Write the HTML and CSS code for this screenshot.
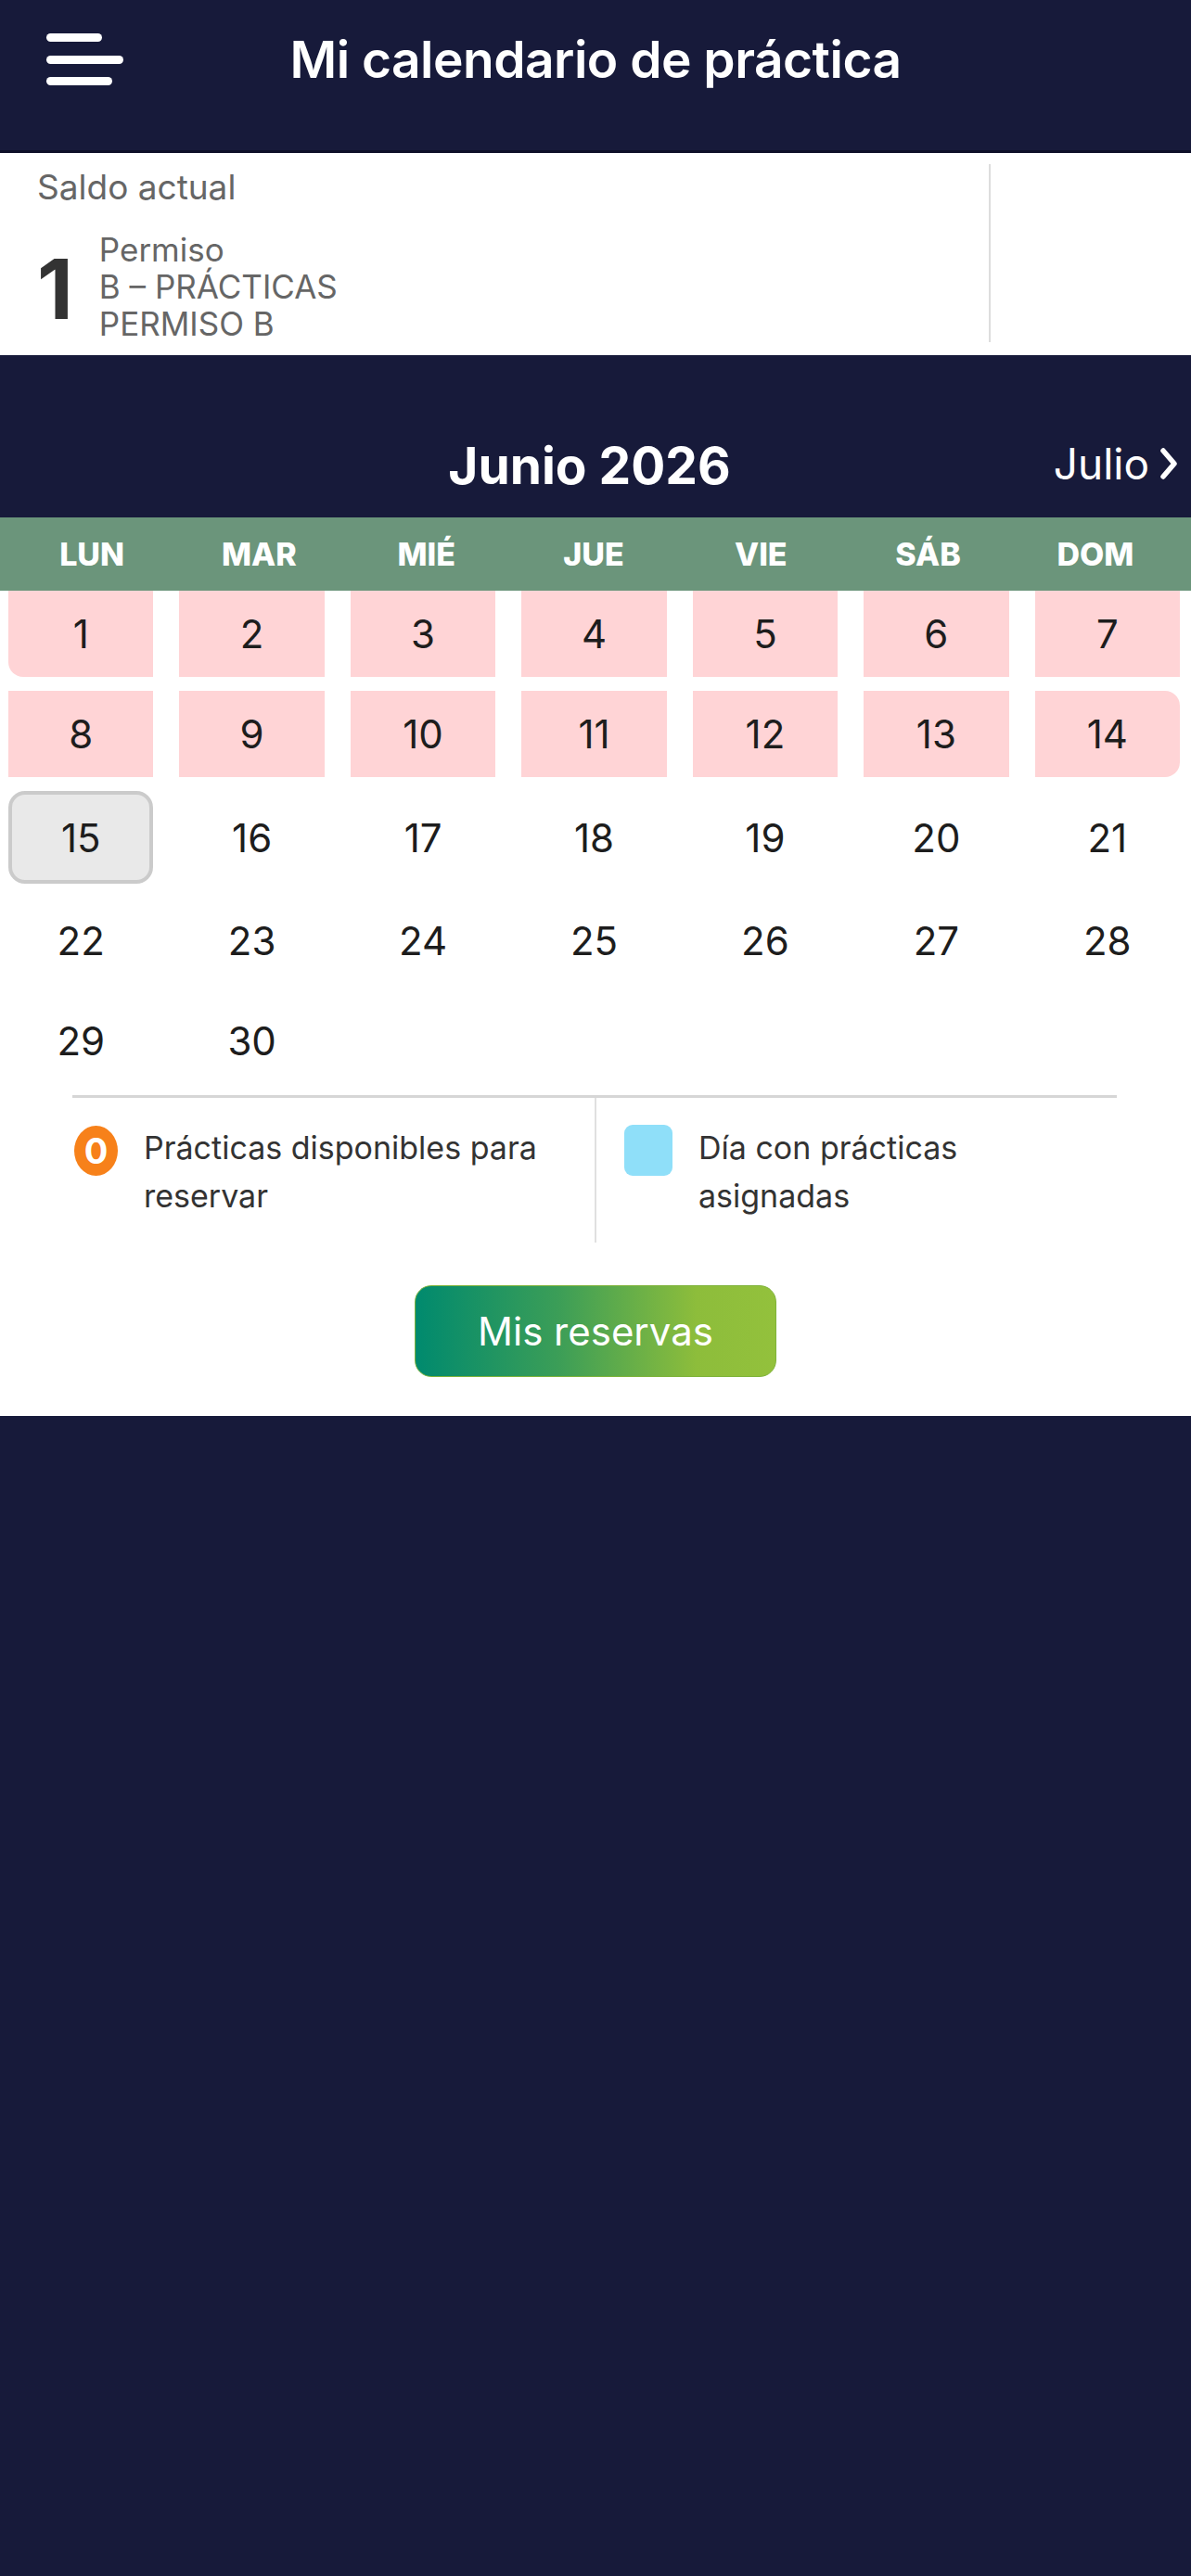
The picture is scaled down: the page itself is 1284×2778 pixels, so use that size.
FILE: index.html
```html
<!DOCTYPE html>
<html lang="es">
<head>
<meta charset="utf-8">
<title>Mi calendario de práctica</title>
<link rel="stylesheet" href="styles.css">
</head>
<body>
<div class="app">
  <header class="topbar">
    <button class="menu" aria-label="Menú">
      <span class="bar bar-1"></span>
      <span class="bar bar-2"></span>
      <span class="bar bar-3"></span>
    </button>
    <h1 class="title">Mi calendario de práctica</h1>
    <div class="spacer"></div>
  </header>

  <section class="balance">
    <div class="balance-main">
      <div class="balance-label">Saldo actual</div>
      <div class="balance-row">
        <div class="balance-count">1</div>
        <div class="balance-desc">
          <div>Permiso</div>
          <div>B – PRÁCTICAS</div>
          <div>PERMISO B</div>
        </div>
      </div>
    </div>
    <div class="balance-side"></div>
  </section>

  <nav class="month-nav">
    <div></div>
    <div class="month-title">Junio 2026</div>
    <div class="month-next">Julio
      <svg class="chev" viewBox="0 0 22 36" width="22" height="36"><path d="M5 4 L17 18 L5 32" fill="none" stroke="#fff" stroke-width="5.5" stroke-linecap="round" stroke-linejoin="round"/></svg>
    </div>
  </nav>

  <main class="calendar">
    <div class="weekdays">
      <div>LUN</div><div>MAR</div><div>MIÉ</div><div>JUE</div><div>VIE</div><div>SÁB</div><div>DOM</div>
    </div>
    <div class="days">
      <div class="day booked start">1</div>
      <div class="day booked">2</div>
      <div class="day booked">3</div>
      <div class="day booked">4</div>
      <div class="day booked">5</div>
      <div class="day booked">6</div>
      <div class="day booked">7</div>
      <div class="day booked">8</div>
      <div class="day booked">9</div>
      <div class="day booked">10</div>
      <div class="day booked">11</div>
      <div class="day booked">12</div>
      <div class="day booked">13</div>
      <div class="day booked end">14</div>
      <div class="day today">15</div>
      <div class="day">16</div>
      <div class="day">17</div>
      <div class="day">18</div>
      <div class="day">19</div>
      <div class="day">20</div>
      <div class="day">21</div>
      <div class="day">22</div>
      <div class="day">23</div>
      <div class="day">24</div>
      <div class="day">25</div>
      <div class="day">26</div>
      <div class="day">27</div>
      <div class="day">28</div>
      <div class="day">29</div>
      <div class="day">30</div>
    </div>

    <div class="legend">
      <div class="legend-item">
        <span class="badge">0</span>
        <span class="legend-text">Prácticas disponibles para reservar</span>
      </div>
      <div class="legend-item legend-right">
        <span class="swatch"></span>
        <span class="legend-text">Día con prácticas asignadas</span>
      </div>
    </div>

    <div class="actions">
      <button class="btn-primary">Mis reservas</button>
    </div>
  </main>
</div>
</body>
</html>
```

FILE: styles.css
```css
* { box-sizing: border-box; }

html, body {
  margin: 0;
  padding: 0;
  background: #171a3a;
}

body {
  font-family: "Inter", "Roboto", "Liberation Sans", sans-serif;
  color: #222;
  min-height: 2778px;
}

.app {
  width: 1284px;
}

/* Header */
.topbar {
  height: 165px;
  display: grid;
  grid-template-columns: 1fr auto 1fr;
  align-items: center;
  padding: 0 50px;
  border-bottom: 3px solid #0e1028;
}

.menu {
  background: none;
  border: 0;
  padding: 0;
  width: 84px;
  height: 56px;
  display: flex;
  flex-direction: column;
  justify-content: space-between;
  align-items: flex-start;
  margin-top: -34px;
  cursor: pointer;
}

.bar {
  display: block;
  height: 9px;
  border-radius: 5px;
  background: #fff;
}
.bar-1 { width: 60px; }
.bar-2 { width: 83px; }
.bar-3 { width: 71px; }

.title {
  margin: -34px 0 0;
  color: #fff;
  font-weight: 600;
  font-size: 55px;
  letter-spacing: -0.5px;
  white-space: nowrap;
}

/* Balance card */
.balance {
  background: #fff;
  height: 218px;
  display: flex;
}

.balance-main {
  flex: 1;
  padding: 14px 0 0 40px;
}

.balance-label {
  font-size: 37px;
  color: #666;
  line-height: 46px;
}

.balance-row {
  display: flex;
  align-items: center;
  margin-top: 22px;
  gap: 28px;
}

.balance-count {
  font-size: 90px;
  font-weight: 700;
  color: #333;
  line-height: 1;
  margin-top: 8px;
}

.balance-desc {
  font-size: 35px;
  line-height: 40px;
  color: #666;
  padding-top: 2px;
}

.balance-side {
  width: 218px;
  margin: 12px 0 14px;
  border-left: 2px solid #ddd;
}

/* Month navigation */
.month-nav {
  height: 175px;
  display: grid;
  grid-template-columns: 1fr auto 1fr;
  align-items: end;
  padding: 0 13px 24px 0;
}

.month-title {
  color: #fff;
  font-weight: 700;
  font-size: 55px;
  line-height: 64px;
}

.month-next {
  justify-self: end;
  color: #fff;
  font-size: 46px;
  line-height: 64px;
  display: flex;
  align-items: center;
  gap: 10px;
  margin-bottom: 2px;
}

.chev { display: block; }

/* Calendar */
.calendar {
  background: #fff;
  padding-bottom: 42px;
}

.weekdays {
  background: #6b957b;
  height: 79px;
  display: grid;
  grid-template-columns: repeat(7, 1fr);
  align-items: center;
  padding: 0 13px 0 9px;
  color: #fff;
  font-weight: 800;
  font-size: 34px;
  text-align: center;
}

.days {
  display: grid;
  grid-template-columns: repeat(7, 1fr);
  column-gap: 28px;
  row-gap: 15px;
  padding: 0 12px 0 9px;
  align-items: center;
}

.day {
  height: 93px;
  display: flex;
  align-items: center;
  justify-content: center;
  font-size: 42px;
  color: #1d1d1d;
}

.day.booked { background: #ffd4d6; }
.day.start { border-radius: 0 0 0 16px; }
.day.end { border-radius: 0 16px 16px 0; }

.day.today {
  height: 100px;
  background: #e9e9e9;
  border: 4px solid #cbcbcb;
  border-radius: 18px;
}

/* Legend */
.legend {
  margin: 12px 80px 0 78px;
  border-top: 3px solid #d6d6d6;
  display: grid;
  grid-template-columns: 1fr 1fr;
}

.legend-item {
  display: flex;
  align-items: flex-start;
  gap: 28px;
  padding: 28px 24px 24px 2px;
}

.legend-right {
  border-left: 2px solid #e0e0e0;
  padding-left: 30px;
}

.badge {
  flex: none;
  width: 47px;
  height: 54px;
  border-radius: 50%;
  background: #f7811a;
  color: #fff;
  font-weight: 700;
  font-size: 38px;
  display: flex;
  align-items: center;
  justify-content: center;
  margin-top: 2px;
}

.swatch {
  flex: none;
  width: 52px;
  height: 55px;
  border-radius: 9px;
  background: #8fdff9;
  margin-top: 1px;
}

.legend-text {
  font-size: 34px;
  line-height: 52px;
  color: #333;
}

/* Action */
.actions {
  display: flex;
  justify-content: center;
  margin-top: 46px;
}

.btn-primary {
  width: 390px;
  height: 99px;
  border: 1px solid #7fb33a;
  border-radius: 18px;
  background: linear-gradient(to right, #008a6e 0%, #3c9e57 40%, #8dbd3b 78%, #93c13c 100%);
  color: #fff;
  font-family: inherit;
  font-size: 42px;
  cursor: pointer;
}
```
